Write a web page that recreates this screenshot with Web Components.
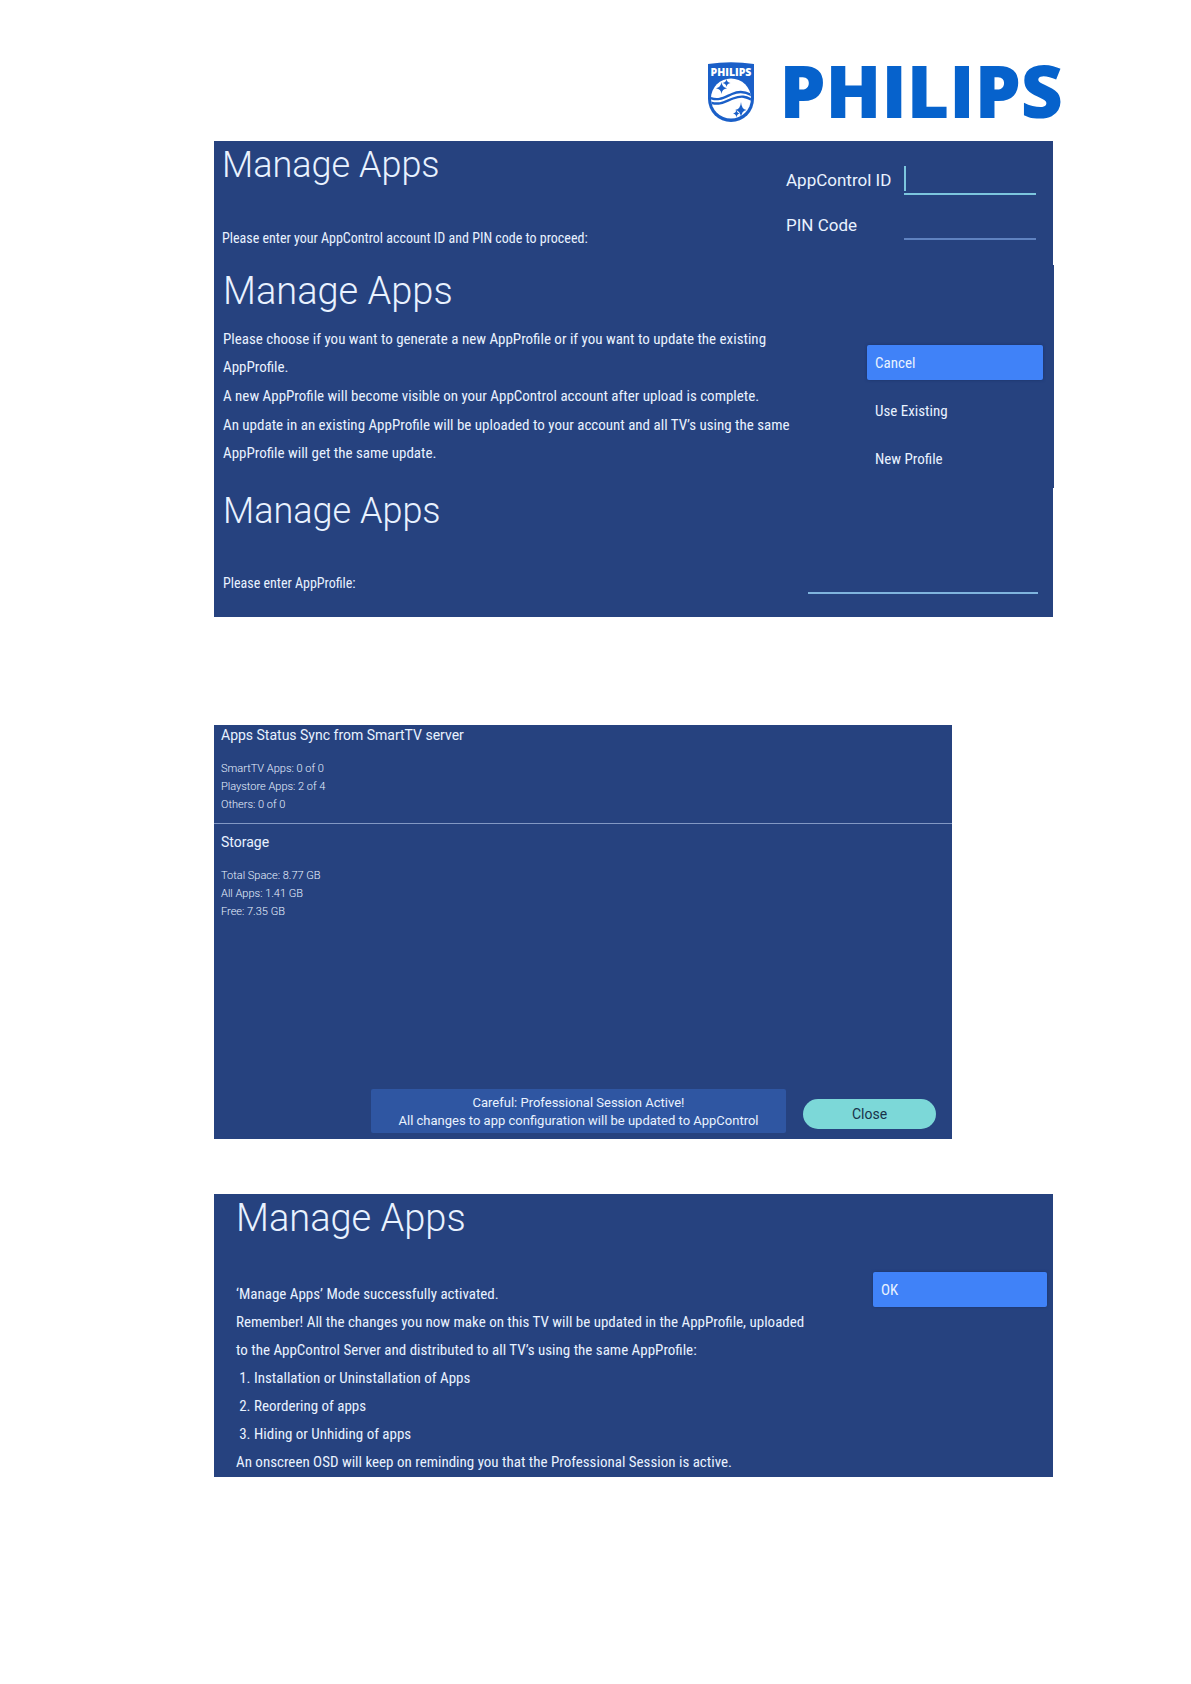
<!DOCTYPE html>
<html lang="en">
<head>
<meta charset="utf-8">
<title>Manage Apps</title>
<style>
  html, body { margin: 0; background: #fff; }
  body { font-family: Roboto, sans-serif; color: #e9f2ff; }
</style>
</head>
<body>
<doc-page>
  <brand-header slot="header"></brand-header>
  <panel-stack>
    <tv-section class="login" heading="Manage Apps">
      <p>Please enter your AppControl account ID and PIN code to proceed:</p>
      <login-fields slot="side"></login-fields>
    </tv-section>
    <tv-section class="choose" heading="Manage Apps">
      <p>Please choose if you want to generate a new AppProfile or if you want to update the existing AppProfile.</p>
      <p>A new AppProfile will become visible on your AppControl account after upload is complete.</p>
      <p>An update in an existing AppProfile will be uploaded to your account and all TV’s using the same AppProfile will get the same update.</p>
      <action-list slot="side" items="Cancel|Use Existing|New Profile"></action-list>
    </tv-section>
    <tv-section class="profile" heading="Manage Apps">
      <p>Please enter AppProfile:</p>
      <line-field slot="side" label="AppProfile" tone="#7fb4de"></line-field>
    </tv-section>
  </panel-stack>
  <status-panel></status-panel>
  <panel-stack>
    <tv-section class="done" heading="Manage Apps">
      <p>‘Manage Apps’ Mode successfully activated.</p>
      <p>Remember! All the changes you now make on this TV will be updated in the AppProfile, uploaded to the AppControl Server and distributed to all TV’s using the same AppProfile:</p>
      <ol>
        <li>Installation or Uninstallation of Apps</li>
        <li>Reordering of apps</li>
        <li>Hiding or Unhiding of apps</li>
      </ol>
      <p>An onscreen OSD will keep on reminding you that the Professional Session is active.</p>
      <action-list slot="side" items="OK"></action-list>
    </tv-section>
  </panel-stack>
</doc-page>

<script>
const define = (name, html, setup) => {
  const template = document.createElement('template');
  template.innerHTML = html;
  customElements.define(name, class extends HTMLElement {
    constructor() {
      super();
      this.attachShadow({ mode: 'open' }).append(template.content.cloneNode(true));
    }
    connectedCallback() { if (setup) setup(this, this.shadowRoot); }
  });
};

define('doc-page', `
<style>
  :host { display: block; box-sizing: border-box; min-height: 100vh; padding: 62px 138px 120px 214px; }
  main { display: flex; flex-direction: column; }
  ::slotted(status-panel) { margin: 108px 101px 55px 0; }
</style>
<slot name="header"></slot>
<main><slot></slot></main>`);

define('brand-header', `
<style>
  :host { display: flex; justify-content: flex-end; gap: 25px; height: 79px; margin-right: -10px; }
  svg { width: 46px; height: 60px; flex: none; }
  .word { font: 800 73px/56px "Open Sans", sans-serif; color: #0662cc; white-space: nowrap; }
</style>
<svg viewBox="0 0 46 60" role="img" aria-label="Philips shield">
  <path fill="#1a5fc8" d="M0 2Q23-1.5 46 2V37A23 23 0 0 1 0 37Z"/>
  <text x="23" y="13.500" text-anchor="middle" fill="#fff" font-family="Open Sans, sans-serif" font-weight="800" font-size="10.500">PHILIPS</text>
  <clipPath id="disc"><circle cx="23" cy="36.500" r="20"/></clipPath>
  <g clip-path="url(#disc)">
    <rect width="46" height="60" fill="#fff"/>
    <g fill="none" stroke="#1a5fc8" stroke-width="2.400">
      <path d="M1 35.500C11 39.500 16 35.500 24 32S38 29.500 45 34"/>
      <path d="M1 40C12 44 17 39.500 25 36.500S38 34 45 38.500"/>
    </g>
  </g>
  <g fill="#1a5fc8">
    <path d="M13.500 20Q14 25.500 19 26.200Q14 27 13.500 32Q13 27 8 26.200Q13 25.500 13.500 20Z"/>
    <path d="M18.500 17Q18.900 20.600 22.500 21Q18.900 21.400 18.500 25Q18.100 21.400 14.500 21Q18.100 20.600 18.500 17Z"/>
    <path d="M33 40Q33.500 47.300 38.500 48Q33.500 48.700 33 56Q32.500 48.700 27 48Q32.500 47.300 33 40Z"/>
    <path d="M28.500 47.500Q28.900 51 31.500 51.500Q28.900 52 28.500 55.500Q28.100 52 25 51.500Q28.100 51 28.500 47.500Z"/>
  </g>
</svg>
<span class="word">PHILIPS</span>`);

define('panel-stack', `
<style>
  :host { display: flex; flex-direction: column; background: #26427f; }
  ::slotted(.login) { --h: 124px; --title: 36px; --title-h: 43px; --left: 8px; --text: 14px; --text-top: 37px; --side: 250px; --side-top: 25px; --right: 17px; }
  ::slotted(.choose) { --h: 223px; --title: 38px; --title-h: 47px; --text-top: 10px; --side: 176px; --side-top: 80px; --right: 11px; margin-right: -1px; }
  ::slotted(.profile) { --h: 129px; --title: 36px; --title-h: 40px; --text: 14px; --text-top: 38px; --side: 230px; --side-top: 80px; --right: 15px; }
  ::slotted(.done) { --h: 283px; --title: 38px; --title-h: 43px; --left: 22px; --text-top: 40px; --gap: 0px; --side: 174px; --side-top: 78px; --right: 6px; }
</style>
<slot></slot>`);

define('tv-section', `
<style>
  :host { display: flex; justify-content: space-between; box-sizing: border-box; min-height: var(--h); padding: 0 var(--right) 0 var(--left, 9px); background: #26427f; }
  h2 { margin: 3px 0 0; font-size: var(--title); line-height: var(--title-h); font-weight: 300; }
  .text { display: flex; flex-direction: column; gap: var(--gap, 1px); margin-top: var(--text-top); max-width: 575px; font: var(--text, 15px)/28px "Roboto Condensed", Roboto, sans-serif; }
  .side { width: var(--side); flex: none; padding-top: var(--side-top); }
  ::slotted(p) { margin: 0; }
  ::slotted(ol) { margin: 0; padding-left: 18px; }
</style>
<div><h2></h2><div class="text"><slot></slot></div></div>
<div class="side"><slot name="side"></slot></div>`, (host, root) => {
  root.querySelector('h2').textContent = host.getAttribute('heading');
});

define('login-fields', `
<style>
  :host { display: grid; grid-template-columns: auto 132px; justify-content: space-between; row-gap: 16px; font-size: 17px; line-height: 29px; }
  .box { display: flex; align-items: flex-start; height: 27px; border-bottom: 2px solid #5f82c0; }
  .box.on { border-color: #7cc6de; }
  .caret { width: 2px; height: 25px; background: #7cc6de; }
  input { flex: 1; min-width: 0; padding: 0; border: 0; outline: 0; background: none; color: inherit; font: inherit; }
</style>
<label for="id">AppControl ID</label><div class="box on"><span class="caret"></span><input id="id" type="text"></div>
<label for="pin">PIN Code</label><div class="box"><input id="pin" type="password"></div>`);

define('line-field', `
<style>
  :host { display: block; }
  input { display: block; box-sizing: border-box; width: 100%; height: 26px; padding: 0; border: 0; border-bottom: 2px solid var(--tone); outline: 0; background: none; color: inherit; font: inherit; }
</style>
<input type="text">`, (host, root) => {
  root.querySelector('input').setAttribute('aria-label', host.getAttribute('label'));
  host.style.setProperty('--tone', host.getAttribute('tone'));
});

define('action-list', `
<style>
  :host { display: flex; flex-direction: column; gap: 13px; }
  button { height: 35px; padding: 2px 8px 0; border: 0; border-radius: 2px; background: none; color: inherit; text-align: left; font: 15px/33px "Roboto Condensed", Roboto, sans-serif; }
  button:first-of-type { background: #4082f8; box-shadow: 0 0 3px #1a3268; }
</style>`, (host, root) => {
  for (const item of host.getAttribute('items').split('|')) {
    const button = document.createElement('button');
    button.type = 'button';
    button.textContent = item;
    root.append(button);
  }
});

define('status-panel', `
<style>
  :host { display: flex; flex-direction: column; min-height: 414px; background: #26427f; }
  section { padding: 0 7px; }
  section:first-of-type { height: 98px; border-bottom: 1px solid #8298c4; }
  h3 { margin: 0 0 15px; font-size: 14px; line-height: 20px; font-weight: 400; }
  section + section { padding-top: 8px; }
  ul { margin: 0; padding: 0; list-style: none; font-size: 11px; line-height: 18px; font-weight: 300; }
  footer { display: flex; align-items: flex-start; justify-content: flex-end; gap: 17px; margin-top: auto; padding: 0 16px 6px; }
  .note { flex: 0 1 415px; box-sizing: border-box; padding: 5px 0 3px; border-radius: 2px; background: #2f56a2; text-align: center; font-size: 13px; line-height: 18px; }
  .note span { display: block; }
  button { width: 133px; height: 30px; margin-top: 10px; padding: 0; border: 0; border-radius: 15px; background: #7cd8d8; color: #17324a; font: 14px/30px Roboto, sans-serif; }
</style>
<section>
  <h3>Apps Status Sync from SmartTV server</h3>
  <ul><li>SmartTV Apps: 0 of 0</li><li>Playstore Apps: 2 of 4</li><li>Others: 0 of 0</li></ul>
</section>
<section>
  <h3>Storage</h3>
  <ul><li>Total Space: 8.77 GB</li><li>All Apps: 1.41 GB</li><li>Free: 7.35 GB</li></ul>
</section>
<footer>
  <div class="note"><span>Careful: Professional Session Active!</span><span>All changes to app configuration will be updated to AppControl</span></div>
  <button type="button">Close</button>
</footer>`);
</script>
</body>
</html>
